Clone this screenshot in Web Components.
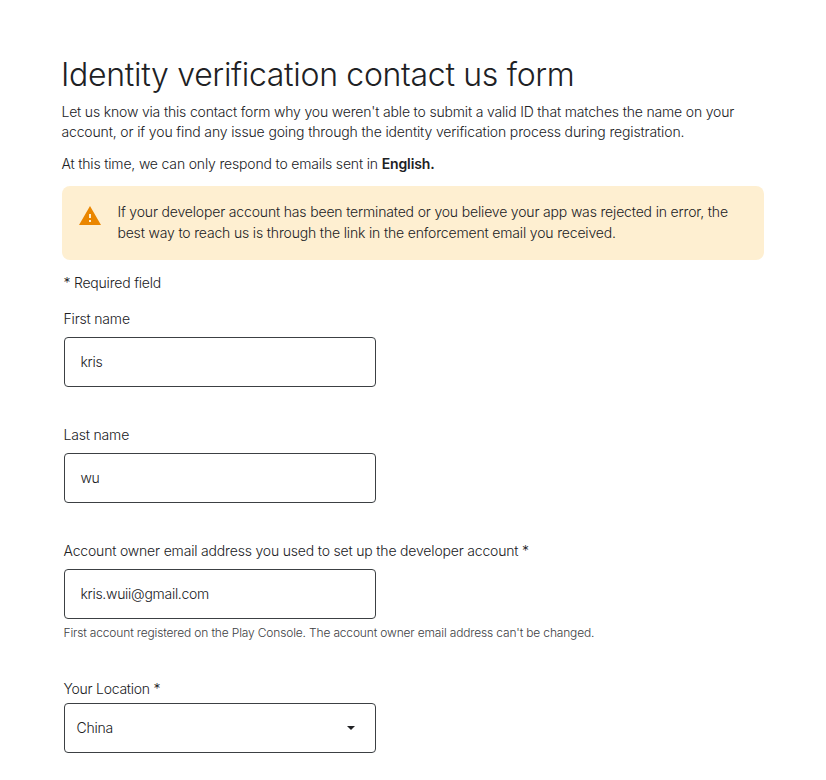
<!DOCTYPE html>
<html lang="en">
<head>
<meta charset="utf-8">
<title>Identity verification contact us form</title>
<style>
  body {
    margin: 0;
    background: #fff;
    color: #202124;
    font: 300 14px/20px Inter, Roboto, sans-serif;
    letter-spacing: -.17px;
  }
</style>
</head>
<body>
<contact-page>
  <page-intro heading="Identity verification contact us form">
    <text-line style="letter-spacing: -.172px">Let us know via this contact form why you weren't able to submit a valid ID that matches the name on your</text-line>
    <text-line style="letter-spacing: -.136px">account, or if you find any issue going through the identity verification process during registration.</text-line>
    <text-line slot="language">At this time, we can only respond to emails sent in <b>English.</b></text-line>
  </page-intro>
  <warning-banner>
    <text-line style="letter-spacing: -.167px">If your developer account has been terminated or you believe your app was rejected in error, the</text-line>
    <text-line style="letter-spacing: -.165px">best way to reach us is through the link in the enforcement email you received.</text-line>
  </warning-banner>
  <required-note>* Required field</required-note>
  <text-field label="First name" value="kris"></text-field>
  <text-field label="Last name" value="wu"></text-field>
  <text-field label="Account owner email address you used to set up the developer account *" value="kris.wuii@gmail.com" hint="First account registered on the Play Console. The account owner email address can't be changed."></text-field>
  <select-field label="Your Location *" value="China"></select-field>
</contact-page>

<script>
function define(name, html, setup) {
  const template = document.createElement('template');
  template.innerHTML = html;

  customElements.define(name, class extends HTMLElement {
    constructor() {
      super();
      this.attachShadow({ mode: 'open' });
      this.shadowRoot.appendChild(template.content.cloneNode(true));
    }

    connectedCallback() {
      if (setup) setup(this, this.shadowRoot);
    }
  });
}

define('contact-page', `
<style>
  :host {
    display: block;
    box-sizing: border-box;
    height: 780px;
    padding: 55px 62px 0;
    overflow: hidden;
  }
</style>
<slot></slot>`);

define('text-line', `
<style>
  :host {
    display: block;
    margin-left: -.6px;
    white-space: nowrap;
  }
  ::slotted(b) {
    font-weight: 600;
    letter-spacing: -.12px;
  }
</style>
<slot></slot>`);

define('page-intro', `
<style>
  :host {
    display: block;
  }
  h1 {
    margin: 0 0 7px -1px;
    font-size: 32px;
    line-height: 40px;
    font-weight: 350;
    letter-spacing: -.31px;
    white-space: nowrap;
  }
  .language {
    margin-top: 12px;
  }
</style>
<h1></h1>
<slot></slot>
<div class="language"><slot name="language"></slot></div>`, (host, root) => {
  root.querySelector('h1').textContent = host.getAttribute('heading');
});

define('warning-banner', `
<style>
  :host {
    display: flex;
    box-sizing: border-box;
    height: 74px;
    margin-top: 12px;
    padding: 15px 16px;
    gap: 16px;
    border-radius: 8px;
    background: #feefd1;
    line-height: 21px;
  }
  svg {
    flex: none;
    width: 24px;
    height: 24px;
    margin-top: 1px;
    fill: #ea8600;
  }
</style>
<svg viewBox="0 0 24 24"><path d="M1 23h22L12 4 1 23zm12-3h-2v-2h2v2zm0-4h-2v-4h2v4z"/></svg>
<div><slot></slot></div>`);

define('required-note', `
<style>
  :host {
    display: block;
    margin: 13px 1.4px 16px;
    letter-spacing: -.2px;
  }
</style>
<slot></slot>`);

define('text-field', `
<style>
  :host {
    display: block;
    height: 116px;
    margin-left: 2px;
  }
  :host([hint]) {
    height: 138px;
  }
  label {
    display: block;
    margin: 0 0 8px -.5px;
    letter-spacing: -.18px;
    white-space: nowrap;
  }
  .box {
    display: flex;
    align-items: center;
    box-sizing: border-box;
    width: 312px;
    height: 50px;
    padding: 0 15.4px;
    border: 1px solid #3c4043;
    border-radius: 4px;
    letter-spacing: -.28px;
  }
  .hint {
    margin: 4px 0 0 -.5px;
    color: #3c4043;
    font-size: 12px;
    letter-spacing: -.162px;
    white-space: nowrap;
  }
</style>
<label></label>
<div class="box"></div>
<div class="hint"></div>`, (host, root) => {
  root.querySelector('label').textContent = host.getAttribute('label');
  root.querySelector('.box').textContent = host.getAttribute('value');
  root.querySelector('.hint').textContent = host.getAttribute('hint');
});

define('select-field', `
<style>
  :host {
    display: block;
    margin-left: 2px;
    letter-spacing: -.25px;
  }
  label {
    display: block;
    margin: 0 0 4px -.5px;
  }
  .box {
    display: flex;
    align-items: center;
    justify-content: space-between;
    box-sizing: border-box;
    width: 312px;
    height: 50px;
    padding: 0 20px 0 11.5px;
    border: 1px solid #3c4043;
    border-radius: 4px;
  }
  svg {
    width: 8px;
    height: 4px;
    fill: #202124;
  }
</style>
<label></label>
<div class="box"><span></span><svg viewBox="0 0 8 4"><path d="M0 0h8L4 4z"/></svg></div>`, (host, root) => {
  root.querySelector('label').textContent = host.getAttribute('label');
  root.querySelector('span').textContent = host.getAttribute('value');
});
</script>
</body>
</html>
